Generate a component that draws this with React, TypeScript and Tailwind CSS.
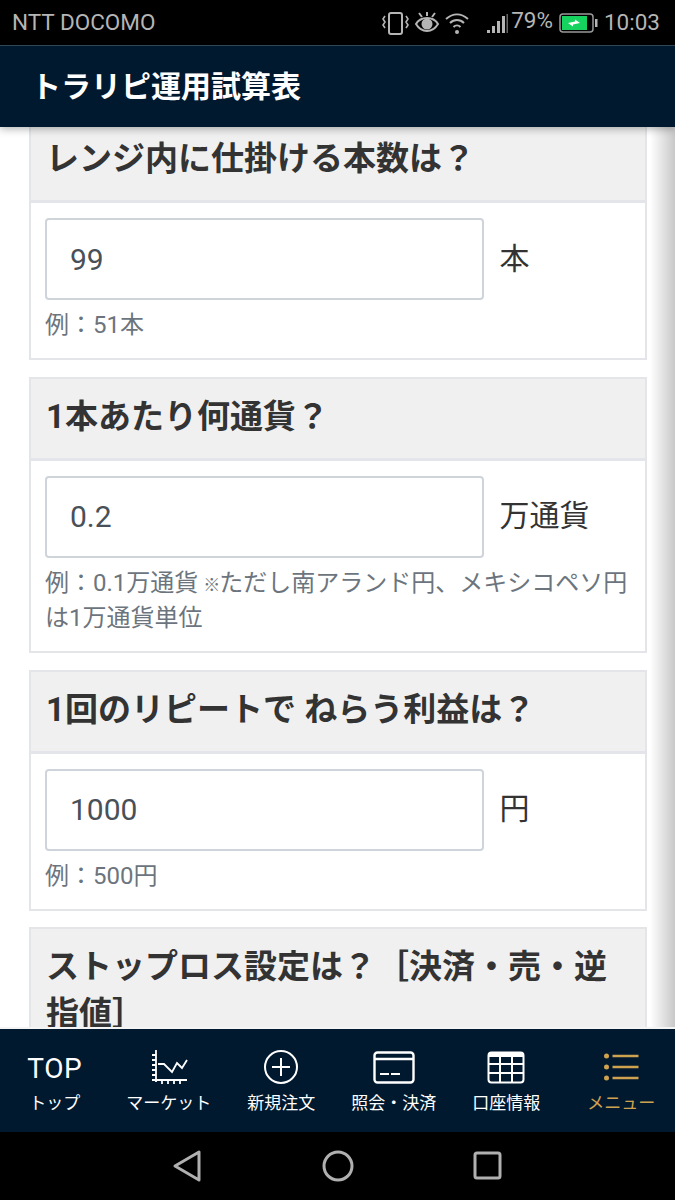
const sans = "font-['Roboto','Noto_Sans_CJK_JP',sans-serif]";

function Field({ title, value, unit, hint }: { title: string; value: string; unit: React.ReactNode; hint: React.ReactNode }) {
  return (
    <section className="shrink-0 w-[618px] border-2 border-[#e3e5e8] bg-white">
      <h2 className="h-[82px] bg-[#f0f0f0] pl-[15.5px] pt-[18px] text-[33px] leading-[40px] font-bold text-[#333] border-b-[3px] border-[#e3e5ea]">
        {title}
      </h2>
      <div className="px-[14.5px] pt-[15px] pb-[15px]">
        <div className="flex items-center">
          <div className="w-[439px] h-[82px] rounded-[4px] border-2 border-[#ced4da] px-[23px] flex items-center text-[30px] text-[#495057]">
            {value}
          </div>
          <span className="ml-[15.5px] mb-[2px] text-[30px] text-[#333]">{unit}</span>
        </div>
        <p className="mt-[8px] text-[24px] leading-[35px] text-[#6c757d]">{hint}</p>
      </div>
    </section>
  );
}

function NavItem({ label, gold, shift, children }: { label: string; gold?: boolean; shift?: string; children: React.ReactNode }) {
  return (
    <div className={`w-[112.5px] flex flex-col items-center ${shift ?? ""} ${gold ? "text-[#cfa24f]" : "text-white"}`}>
      <div className="h-[54px] flex items-center justify-center">{children}</div>
      <span className="text-[17px] leading-[24px] -mt-[3px] whitespace-nowrap">{label}</span>
    </div>
  );
}

export default function App() {
  return (
    <div className={`${sans} w-[675px] h-[1200px] flex flex-col overflow-hidden bg-white`}>
      <div className="h-[45px] bg-black flex items-center justify-between pl-[12px] pr-[15px] text-[#b5b5b5] text-[22.5px] shrink-0">
        <span>NTT DOCOMO</span>
        <div className="flex items-center">
          <svg width="27" height="24" viewBox="0 0 27 24" fill="none" stroke="#b5b5b5" strokeWidth="2">
            <rect x="7" y="2" width="13" height="21" rx="2" />
            <path d="M3 5L1 8l2 3-2 3 2 3M24 5l2 3-2 3 2 3-2 3" strokeWidth="1.6" />
          </svg>
          <svg width="26" height="24" viewBox="0 0 26 24" fill="none" stroke="#b5b5b5" strokeWidth="2" className="ml-[5px]">
            <path d="M2 13c3-5 7-6 11-6s8 1 11 6c-3 5-7 7-11 7s-8-2-11-7z" />
            <circle cx="13" cy="13" r="4.5" fill="#b5b5b5" />
            <path d="M5 2l3 4M13 1v4M21 2l-3 4" />
          </svg>
          <svg width="26" height="24" viewBox="0 0 26 24" fill="none" stroke="#b5b5b5" strokeWidth="2" className="ml-[3.5px]">
            <path d="M2 8c7-6 15-6 22 0M6 12c4-4 10-4 14 0M9.500 16c2-2 5-2 7 0" />
            <circle cx="13" cy="21" r="2" fill="#b5b5b5" stroke="none" />
          </svg>
          <svg width="22" height="24" viewBox="0 0 22 24" fill="#b5b5b5" className="ml-[16.5px]">
            <rect x="1" y="19" width="3" height="3" />
            <rect x="6" y="15" width="3" height="7" />
            <rect x="11" y="10" width="3" height="12" />
            <rect x="16" y="5" width="3" height="17" />
            <rect x="20.500" y="3" width="1.500" height="19" fill="#666" />
          </svg>
          <span className="ml-[3px] -mt-[3px]">79%</span>
          <svg width="40" height="22" viewBox="0 0 40 22" className="ml-[6px]">
            <rect x="1" y="2" width="33" height="18" rx="3" fill="none" stroke="#999" strokeWidth="1.500" />
            <rect x="3" y="4" width="25" height="14" fill="#16d35f" />
            <rect x="36" y="7" width="2.500" height="8" fill="#b5b5b5" />
            <path d="M9 11l7-1.500 0-2 5 3.500-7 1.500 0 2z" fill="#fff" />
          </svg>
          <span className="ml-[5px]">10:03</span>
        </div>
      </div>

      <header className="h-[82px] shrink-0 bg-[#00192f] border-t border-[#2f4656] flex items-center pl-[31px] text-white text-[30px] font-bold shadow-[0_2px_8px_rgba(0,0,0,0.3)] z-10 relative">
        トラリピ運用試算表
      </header>

      <main className="flex-1 min-h-0 overflow-hidden relative pl-[28.5px] flex flex-col gap-[16.7px]">
        <div className="absolute top-0 bottom-0 right-0 w-[25px] bg-gradient-to-r from-transparent to-[#c8c8c8] pointer-events-none" />
        <div className="-mt-[7.75px]">
          <Field title="レンジ内に仕掛ける本数は？" value="99" unit="本" hint="例：51本" />
        </div>
        <Field
          title="1本あたり何通貨？"
          value="0.2"
          unit="万通貨"
          hint={<>例：0.1万通貨 <span className="text-[17px] leading-none -ml-[1px] -mr-[1px] font-bold">※</span>ただし南アランド円、メキシコペソ円は1万通貨単位</>}
        />
        <Field title="1回のリピートで ねらう利益は？" value="1000" unit="円" hint="例：500円" />
        <section className="shrink-0 w-[618px] border-2 border-[#e3e5e8] bg-[#f0f0f0] pl-[15.5px] pr-[15px] pt-[14px] text-[33px] leading-[47px] font-bold text-[#333]">
          ストップロス設定は？［決済・売・逆指値］
        </section>
      </main>

      <nav className="h-[105px] -mt-[2px] shrink-0 bg-[#00192f] flex pt-[11px] border-t-2 border-[#f4f4f4] z-10">
        <NavItem label="トップ" shift="-translate-x-[1.5px]"><span className="text-[28px] tracking-[0.5px] pt-[4px]">TOP</span></NavItem>
        <NavItem label="マーケット">
          <svg width="36" height="35" viewBox="0 0 36 35" fill="none" stroke="currentColor" strokeWidth="1.800" className="ml-[3px]">
            <path d="M4 0v32M0 5h4M0 10h4M0 15h4M0 20h4M0 25h4M0 30h35M10 30v4M16 30v4M22 30v4M28 30v4" />
            <path d="M6 14h6l8 8 5-9 5 5 5-8" strokeWidth="1.800" />
          </svg>
        </NavItem>
        <NavItem label="新規注文">
          <svg width="36" height="36" viewBox="0 0 36 36" fill="none" stroke="currentColor" strokeWidth="2">
            <circle cx="18" cy="18" r="16" />
            <path d="M18 9v18M9 18h18" />
          </svg>
        </NavItem>
        <NavItem label="照会・決済">
          <svg width="42" height="33" viewBox="0 0 42 33" fill="none" stroke="currentColor" strokeWidth="2.400">
            <rect x="1.500" y="1.500" width="39" height="30" rx="3" />
            <path d="M1 8h40" />
            <path d="M7 23h9M18 23h9" strokeWidth="1.800" />
          </svg>
        </NavItem>
        <NavItem label="口座情報">
          <svg width="38" height="33" viewBox="0 0 38 33" fill="none" stroke="currentColor" strokeWidth="2">
            <rect x="1.500" y="1.500" width="35" height="30" rx="3" />
            <path d="M1 4h36" strokeWidth="4" />
            <path d="M1 13h36M1 22h36M13 3v28M25 3v28" />
          </svg>
        </NavItem>
        <NavItem label="メニュー" gold shift="translate-x-[2.5px]">
          <svg width="36" height="30" viewBox="0 0 36 30" fill="none" stroke="currentColor" strokeWidth="2.400">
            <path d="M9 4h26M9 15h26M9 26h26" />
            <circle cx="3" cy="4" r="2.500" fill="currentColor" stroke="none" />
            <circle cx="3" cy="15" r="2.500" fill="currentColor" stroke="none" />
            <circle cx="3" cy="26" r="2.500" fill="currentColor" stroke="none" />
          </svg>
        </NavItem>
      </nav>

      <div className="h-[68px] shrink-0 bg-black flex items-center pl-[172px]">
        <svg width="30" height="34" viewBox="0 0 30 34" fill="none" stroke="#b0b0b0" strokeWidth="3" strokeLinejoin="round"><path d="M27 3v28L3 17z" /></svg>
        <svg width="32" height="32" viewBox="0 0 32 32" fill="none" stroke="#b0b0b0" strokeWidth="3" className="ml-[120px]"><circle cx="16" cy="16" r="14" /></svg>
        <svg width="30" height="30" viewBox="0 0 30 30" fill="none" stroke="#b0b0b0" strokeWidth="3" className="ml-[119px]"><rect x="2" y="2" width="25" height="25" rx="2" /></svg>
      </div>
    </div>
  );
}
